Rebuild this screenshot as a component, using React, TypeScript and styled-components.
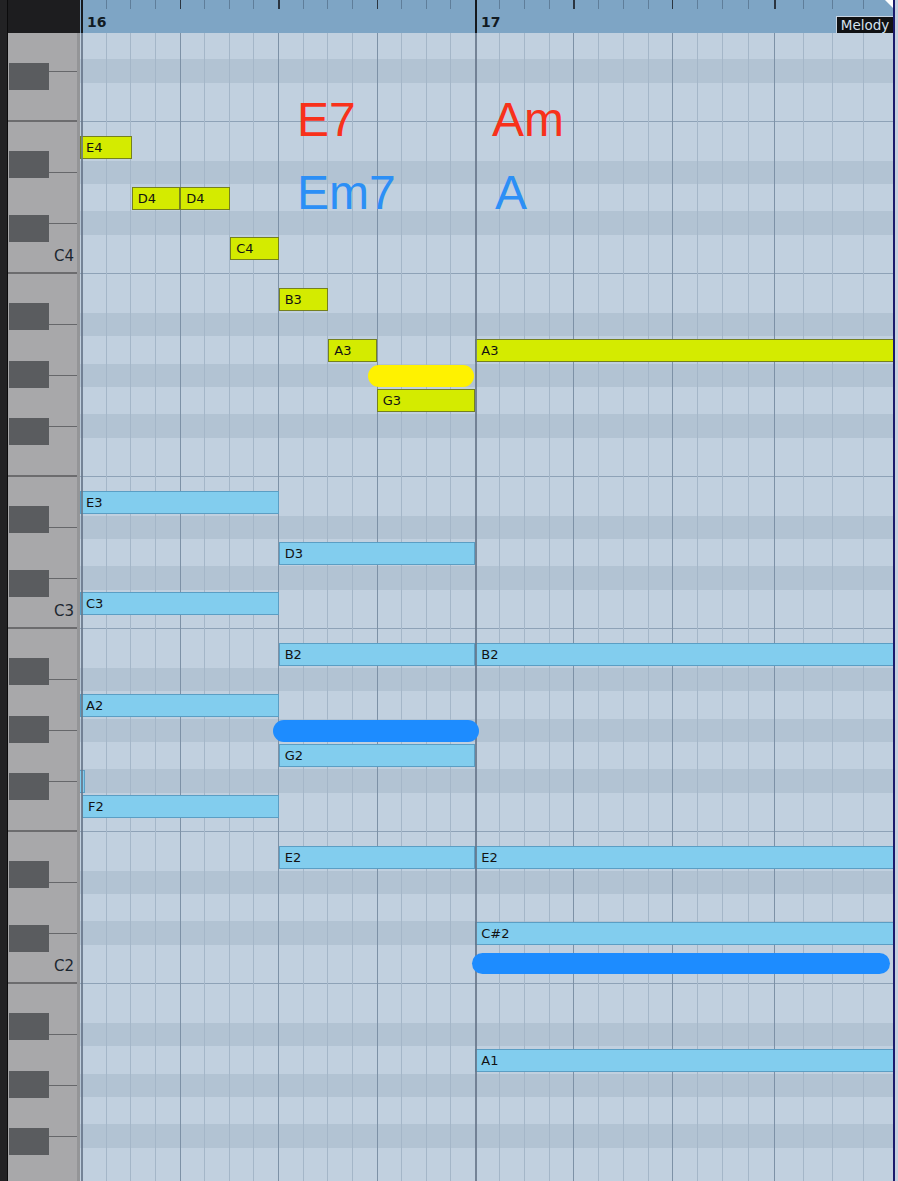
import React from "react";
import styled, { createGlobalStyle } from "styled-components";

const GlobalStyle = createGlobalStyle`
  html, body {
    margin: 0;
    padding: 0;
    background: #1e1e20;
  }
  body {
    font-family: "DejaVu Sans", "Liberation Sans", sans-serif;
  }
  #root {
    width: 898px;
    height: 1181px;
  }
`;

// geometry of the roll, measured on the editor
const KEY_H = 50.714;
const HEADER_H = 33;
const ROLL_LEFT = 80;
const KEYS_OFFSET = 20.6 - HEADER_H;

const LETTERS = ["G", "F", "E", "D", "C", "B", "A"];
const SHARP_OFFSET: Record<string, number> = { C: 5, D: -8, F: 5, G: -1, A: -8 };

interface WhiteKeyInfo {
  letter: string;
  name: string;
}

const whiteKeys: WhiteKeyInfo[] = Array.from({ length: 24 }, (_, i) => {
  const letter = LETTERS[i % 7];
  const octave = 4 - Math.floor((i + 2) / 7);
  return { letter, name: `${letter}${octave}` };
});

const blackKeys = whiteKeys
  .map((k, i) => ({ lower: whiteKeys[i + 1], boundary: KEYS_OFFSET + (i + 1) * KEY_H }))
  .filter((b) => b.lower && SHARP_OFFSET[b.lower.letter] !== undefined)
  .map((b) => ({ ...b, center: b.boundary + SHARP_OFFSET[b.lower.letter] }));

const centerOf = (pitch: string) => {
  const sharp = pitch.includes("#");
  const idx = whiteKeys.findIndex((k) => k.name === pitch.replace("#", ""));
  return sharp ? KEYS_OFFSET + idx * KEY_H : KEYS_OFFSET + (idx + 0.5) * KEY_H;
};

// grid columns: bar 16 is even, bar 17 was captured a bit stretched
const bar16 = Array.from({ length: 16 }, (_, k) => 81 + k * 24.625);
const bar17 = [
  475, 499.3, 524, 549.3, 573.3, 598.3, 622.7, 647.7, 671.7, 696.7, 721.7, 747.7, 774.3,
  803.3, 831.7, 863.3,
];
type LineKind = "bar" | "beat" | "step";
const gridLines = [...bar16, ...bar17].map((x, k) => ({
  x: x - ROLL_LEFT,
  kind: (k % 16 === 0 ? "bar" : k % 4 === 0 ? "beat" : "step") as LineKind,
}));

type NoteKind = "melody" | "bass";
interface Note {
  pitch: string;
  x1: number;
  x2: number;
  kind: NoteKind;
  label?: boolean;
}

const notes: Note[] = [
  { pitch: "E4", x1: 80, x2: 132, kind: "melody" },
  { pitch: "D4", x1: 131.7, x2: 180.3, kind: "melody" },
  { pitch: "D4", x1: 180.3, x2: 230.3, kind: "melody" },
  { pitch: "C4", x1: 230.3, x2: 278.7, kind: "melody" },
  { pitch: "B3", x1: 278.7, x2: 328.3, kind: "melody" },
  { pitch: "A3", x1: 328.3, x2: 376.7, kind: "melody" },
  { pitch: "G3", x1: 376.7, x2: 475.3, kind: "melody" },
  { pitch: "A3", x1: 475.3, x2: 900, kind: "melody" },
  { pitch: "E3", x1: 80, x2: 278.7, kind: "bass" },
  { pitch: "D3", x1: 278.7, x2: 475.3, kind: "bass" },
  { pitch: "C3", x1: 80, x2: 278.7, kind: "bass" },
  { pitch: "B2", x1: 278.7, x2: 475.3, kind: "bass" },
  { pitch: "B2", x1: 475.3, x2: 900, kind: "bass" },
  { pitch: "A2", x1: 80, x2: 278.7, kind: "bass" },
  { pitch: "G2", x1: 278.7, x2: 475.3, kind: "bass" },
  { pitch: "F#2", x1: 78, x2: 82, kind: "bass", label: false },
  { pitch: "F2", x1: 82, x2: 278.7, kind: "bass" },
  { pitch: "E2", x1: 278.7, x2: 475.3, kind: "bass" },
  { pitch: "E2", x1: 475.3, x2: 900, kind: "bass" },
  { pitch: "C#2", x1: 475.3, x2: 900, kind: "bass" },
  { pitch: "A1", x1: 475.3, x2: 900, kind: "bass" },
];

const pills = [
  { x1: 367.5, x2: 474, y1: 365, y2: 386.5, tone: "yellow" as const },
  { x1: 272.5, x2: 479, y1: 720, y2: 741.5, tone: "blue" as const },
  { x1: 471.5, x2: 890, y1: 952.5, y2: 974, tone: "blue" as const },
];

const chords = [
  { text: "E7", x: 297, y: 96, tone: "red" as const },
  { text: "Am", x: 492, y: 96, tone: "red" as const },
  { text: "Em7", x: 297, y: 169, tone: "blue" as const },
  { text: "A", x: 495, y: 169, tone: "blue" as const },
];

const Frame = styled.div`
  display: flex;
  width: 898px;
  height: 1181px;
  overflow: hidden;
  background: #1e1e20;
`;

const SideStrip = styled.div`
  width: 7px;
  flex-shrink: 0;
  background: #222224;
  border-right: 1px solid #0b0b0c;
`;

const Editor = styled.div`
  flex: 1;
  display: flex;
  flex-direction: column;
  min-width: 0;
`;

const HeaderRow = styled.div`
  display: flex;
  height: ${HEADER_H}px;
  flex-shrink: 0;
`;

const Corner = styled.div`
  width: 72px;
  background: #1d1d1f;
`;

const Ruler = styled.div`
  position: relative;
  flex: 1;
  background: #7ea5c5;
  overflow: hidden;
`;

const RulerTick = styled.div<{ $kind: LineKind }>`
  position: absolute;
  top: 0;
  width: ${(p) => (p.$kind === "step" ? 1 : 1.5)}px;
  height: ${(p) => (p.$kind === "bar" ? "100%" : "9px")};
  background: ${(p) =>
    p.$kind === "bar" ? "#15191e" : p.$kind === "beat" ? "#2b3540" : "#5f7e9a"};
`;

const BarNumber = styled.div`
  position: absolute;
  top: 14px;
  font-family: "DejaVu Sans", sans-serif;
  font-weight: 700;
  font-size: 14px;
  line-height: 16px;
  color: #111a22;
`;

const TrackTag = styled.div`
  position: absolute;
  right: 0;
  bottom: 0;
  width: 57px;
  height: 17px;
  box-sizing: border-box;
  background: #111214;
  border-top: 1px solid #c9d5e3;
  border-left: 1px solid #c9d5e3;
  color: #d6e2ef;
  font-family: "DejaVu Sans", sans-serif;
  font-size: 13.5px;
  line-height: 16px;
  text-align: center;
`;

const CornerFlag = styled.div`
  position: absolute;
  top: 0;
  right: 0;
  width: 0;
  height: 0;
  border-top: 8px solid #ffffff;
  border-left: 8px solid transparent;
`;

const BodyRow = styled.div`
  flex: 1;
  display: flex;
  min-height: 0;
`;

const Keyboard = styled.div`
  position: relative;
  width: 72px;
  flex-shrink: 0;
  box-sizing: border-box;
  background: #a8a8aa;
  border-right: 3px solid #949597;
  overflow: hidden;
`;

const KeyColumn = styled.div`
  display: flex;
  flex-direction: column;
  margin-top: ${KEYS_OFFSET}px;
`;

const WhiteKey = styled.div<{ $edge: boolean }>`
  height: ${KEY_H}px;
  flex-shrink: 0;
  box-sizing: border-box;
  display: flex;
  align-items: flex-end;
  justify-content: flex-end;
  padding: 0 3px 8px 0;
  border-bottom: ${(p) => (p.$edge ? "2px solid #6c6c6e" : "none")};
`;

const KeyLabel = styled.span`
  font-family: "DejaVu Sans", sans-serif;
  font-size: 15px;
  line-height: 16px;
  color: #1c2630;
`;

const BlackKey = styled.div`
  position: absolute;
  left: 1px;
  width: 40px;
  height: 27px;
  background: #5a5c5f;
`;

const KeySplit = styled.div`
  position: absolute;
  left: 41px;
  right: 0;
  height: 1px;
  background: #66676a;
`;

const Roll = styled.div`
  position: relative;
  flex: 1;
  overflow: hidden;
  background: #c1d0df;
`;

const LaneColumn = styled.div`
  display: flex;
  flex-direction: column;
  margin-top: ${KEYS_OFFSET}px;
`;

const Lane = styled.div<{ $edge: boolean }>`
  height: ${KEY_H}px;
  flex-shrink: 0;
  box-sizing: border-box;
  border-bottom: ${(p) => (p.$edge ? "1px solid #8ea2b7" : "none")};
`;

const SharpBand = styled.div`
  position: absolute;
  left: 0;
  right: 0;
  height: 23.5px;
  background: #b2c3d3;
`;

const GridLine = styled.div<{ $kind: LineKind }>`
  position: absolute;
  top: 0;
  bottom: 0;
  width: ${(p) => (p.$kind === "bar" ? 1.5 : 1)}px;
  background: ${(p) =>
    p.$kind === "bar" ? "#66768a" : p.$kind === "beat" ? "#7d91a6" : "#a4b6c8"};
  z-index: ${(p) => (p.$kind === "bar" ? 3 : 0)};
  opacity: ${(p) => (p.$kind === "bar" ? 0.85 : 1)};
`;

const NoteBox = styled.div<{ $kind: NoteKind }>`
  position: absolute;
  height: 23px;
  box-sizing: border-box;
  padding-left: 5px;
  background: ${(p) => (p.$kind === "melody" ? "#d4eb00" : "#82cdee")};
  border: 1px solid ${(p) => (p.$kind === "melody" ? "#75801f" : "#5b9ec4")};
  font-family: "DejaVu Sans", sans-serif;
  font-size: 13px;
  line-height: 21px;
  color: #121212;
  white-space: nowrap;
  overflow: hidden;
  z-index: 2;
`;

const Pill = styled.div<{ $tone: "yellow" | "blue" }>`
  position: absolute;
  border-radius: 12px;
  background: ${(p) => (p.$tone === "yellow" ? "#fff200" : "#1d8cff")};
  z-index: 4;
`;

const ChordName = styled.div<{ $tone: "red" | "blue" }>`
  position: absolute;
  font-family: "Liberation Sans", Arial, sans-serif;
  font-size: 48px;
  line-height: 48px;
  color: ${(p) => (p.$tone === "red" ? "#f8311a" : "#2c8ff6")};
  white-space: nowrap;
  z-index: 5;
`;

const RightRail = styled.div`
  width: 3px;
  flex-shrink: 0;
  background: #c3cfdf;
  border-left: 2px solid #1b1a6c;
`;

const App: React.FC = () => {
  return (
    <>
      <GlobalStyle />
      <Frame>
        <SideStrip />
        <Editor>
          <HeaderRow>
            <Corner />
            <Ruler>
              {gridLines.map((l, i) => (
                <RulerTick key={i} $kind={l.kind} style={{ left: l.x }} />
              ))}
              <BarNumber style={{ left: 7 }}>16</BarNumber>
              <BarNumber style={{ left: 401 }}>17</BarNumber>
              <CornerFlag />
              <TrackTag>Melody</TrackTag>
            </Ruler>
          </HeaderRow>
          <BodyRow>
            <Keyboard>
              <KeyColumn>
                {whiteKeys.map((k, i) => (
                  <WhiteKey key={i} $edge={k.letter === "F" || k.letter === "C"}>
                    {k.letter === "C" && <KeyLabel>{k.name}</KeyLabel>}
                  </WhiteKey>
                ))}
              </KeyColumn>
              {blackKeys.map((b, i) => (
                <React.Fragment key={i}>
                  <BlackKey style={{ top: b.center - 13.5 }} />
                  <KeySplit style={{ top: b.boundary - 0.5 }} />
                </React.Fragment>
              ))}
            </Keyboard>
            <Roll>
              <LaneColumn>
                {whiteKeys.map((k, i) => (
                  <Lane key={i} $edge={k.letter === "F" || k.letter === "C"} />
                ))}
              </LaneColumn>
              {blackKeys.map((b, i) => (
                <SharpBand key={i} style={{ top: b.boundary - 12 }} />
              ))}
              {gridLines.map((l, i) => (
                <GridLine key={i} $kind={l.kind} style={{ left: l.x }} />
              ))}
              {notes.map((n, i) => (
                <NoteBox
                  key={i}
                  $kind={n.kind}
                  style={{
                    left: n.x1 - ROLL_LEFT,
                    width: n.x2 - n.x1,
                    top: centerOf(n.pitch) - 11.5,
                  }}
                >
                  {n.label === false ? null : n.pitch}
                </NoteBox>
              ))}
              {pills.map((p, i) => (
                <Pill
                  key={i}
                  $tone={p.tone}
                  style={{
                    left: p.x1 - ROLL_LEFT,
                    width: p.x2 - p.x1,
                    top: p.y1 - HEADER_H,
                    height: p.y2 - p.y1,
                  }}
                />
              ))}
              {chords.map((c, i) => (
                <ChordName
                  key={i}
                  $tone={c.tone}
                  style={{ left: c.x - ROLL_LEFT, top: c.y - HEADER_H }}
                >
                  {c.text}
                </ChordName>
              ))}
            </Roll>
          </BodyRow>
        </Editor>
        <RightRail />
      </Frame>
    </>
  );
};

export default App;
